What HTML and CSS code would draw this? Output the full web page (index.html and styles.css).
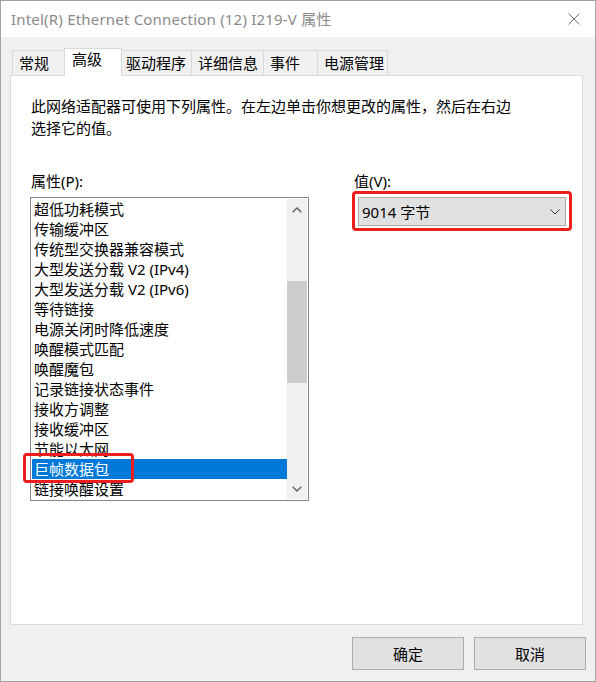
FILE: index.html
```
<!DOCTYPE html>
<html lang="zh-CN">
<head>
<meta charset="utf-8">
<title>属性</title>
<link rel="stylesheet" href="styles.css">
</head>
<body>
<div class="window">
  <div class="titlebar">
    <span class="title">Intel(R) Ethernet Connection (12) I219-V 属性</span>
    <svg class="close" width="12" height="12" viewBox="0 0 12 12"><path d="M0.5 0.5 L11.5 11.5 M11.5 0.5 L0.5 11.5" stroke="#6e6e6e" stroke-width="1" fill="none"/></svg>
  </div>
  <div class="client">
    <div class="tabs">
      <div class="tab w-general">常规</div>
      <div class="tab tab-active w-adv">高级</div>
      <div class="tab w-driver">驱动程序</div>
      <div class="tab w-detail">详细信息</div>
      <div class="tab w-event">事件</div>
      <div class="tab w-power">电源管理</div>
    </div>
    <div class="panel">
      <p class="desc">此网络适配器可使用下列属性。在左边单击你想更改的属性，然后在右边<br>选择它的值。</p>
      <div class="props">
        <div class="col-left">
          <div class="label">属性(P):</div>
          <div class="listbox">
            <ul class="items">
              <li>超低功耗模式</li>
              <li>传输缓冲区</li>
              <li>传统型交换器兼容模式</li>
              <li>大型发送分载 V2 (IPv4)</li>
              <li>大型发送分载 V2 (IPv6)</li>
              <li>等待链接</li>
              <li>电源关闭时降低速度</li>
              <li>唤醒模式匹配</li>
              <li>唤醒魔包</li>
              <li>记录链接状态事件</li>
              <li>接收方调整</li>
              <li>接收缓冲区</li>
              <li>节能以太网</li>
              <li class="selected">巨帧数据包</li>
              <li>链接唤醒设置</li>
            </ul>
            <div class="scrollbar">
              <div class="sb-btn"><svg width="10" height="6" viewBox="0 0 10 6"><path d="M0.7 5.3 L5 1 L9.3 5.3" stroke="#606060" stroke-width="1.4" fill="none"/></svg></div>
              <div class="sb-track"><div class="sb-thumb"></div></div>
              <div class="sb-btn"><svg width="10" height="6" viewBox="0 0 10 6"><path d="M0.7 0.7 L5 5 L9.3 0.7" stroke="#606060" stroke-width="1.4" fill="none"/></svg></div>
            </div>
            <div class="mark mark-item"></div>
          </div>
        </div>
        <div class="col-right">
          <div class="label">值(V):</div>
          <div class="combo-wrap">
            <div class="combo">
              <span class="combo-text">9014 字节</span>
              <svg class="combo-arrow" width="10" height="6" viewBox="0 0 10 6"><path d="M0.5 0.5 L5 5 L9.5 0.5" stroke="#3c3c3c" stroke-width="1" fill="none"/></svg>
            </div>
            <div class="mark mark-combo"></div>
          </div>
        </div>
      </div>
    </div>
    <div class="buttons">
      <button class="btn">确定</button>
      <button class="btn">取消</button>
    </div>
  </div>
</div>
</body>
</html>
```
FILE: styles.css
```
* { box-sizing: border-box; }
html, body { margin: 0; padding: 0; }
body {
  width: 596px;
  height: 682px;
  overflow: hidden;
  font-family: "Noto Sans", "Noto Sans CJK SC", sans-serif;
  font-size: 15px;
  color: #000;
  background: #f0f0f0;
}
.window {
  width: 596px;
  height: 682px;
  border: 1px solid #a3a3a3;
  background: #f0f0f0;
  display: flex;
  flex-direction: column;
}
.titlebar {
  height: 36px;
  flex: none;
  background: #fff;
  display: flex;
  align-items: center;
  padding-left: 10px;
}
.title {
  color: #8a8a8a;
  line-height: 20px;
  letter-spacing: 0.2px;
  white-space: nowrap;
}
.close { margin-left: auto; margin-right: 15px; }
.client {
  flex: 1;
  padding: 11px 9px 0 9px;
}
.tabs {
  display: flex;
  align-items: flex-end;
  height: 28px;
  margin-left: 2px;
  position: relative;
  z-index: 1;
}
.tab {
  height: 25px;
  margin-bottom: 1px;
  border: 1px solid #d9d9d9;
  border-right: none;
  border-bottom: none;
  background: #f0f0f0;
  padding: 2px 0 0 6px;
  line-height: 20px;
  white-space: nowrap;
}
.tab:last-child { border-right: 1px solid #d9d9d9; }
.tab-active {
  height: 28px;
  margin-bottom: 0;
  background: #fff;
  border-right: 1px solid #d9d9d9;
  padding: 0 0 0 7px;
}
.tab-active + .tab { border-left: none; padding-left: 4px; }
.w-general { width: 52px; }
.w-adv { width: 58px; }
.w-driver { width: 69px; }
.w-detail { width: 72px; }
.w-event { width: 54px; }
.w-power { width: 71px; }
.panel {
  margin-top: -1px;
  width: 573px;
  height: 550px;
  border: 1px solid #d9d9d9;
  background: #fff;
  padding: 19px 0 0 19px;
}
.desc {
  margin: 0;
  line-height: 22px;
  padding-left: 1px;
  white-space: nowrap;
}
.props {
  display: grid;
  grid-template-columns: 279px 230px;
  column-gap: 45px;
  margin-top: 32px;
}
.label {
  line-height: 20px;
  margin-bottom: 6px;
  white-space: nowrap;
}
.col-left .label { padding-left: 1px; }
.listbox {
  position: relative;
  width: 279px;
  height: 304px;
  border: 1px solid #828790;
  background: #fff;
  padding: 1px;
  display: flex;
}
.items {
  list-style: none;
  margin: 0;
  padding: 0;
  width: 255px;
  overflow: hidden;
  flex: none;
}
.items li {
  height: 20px;
  line-height: 20px;
  padding-left: 2px;
  white-space: nowrap;
}
.items li.selected { background: #0078d7; color: #fff; }
.scrollbar {
  width: 20px;
  flex: none;
  background: #f0f0f0;
  display: flex;
  flex-direction: column;
}
.sb-btn {
  height: 21px;
  flex: none;
  display: flex;
  align-items: center;
  justify-content: center;
}
.sb-track { flex: 1; }
.sb-thumb {
  margin-top: 61px;
  height: 102px;
  background: #cdcdcd;
}
.combo-wrap {
  position: relative;
  margin-left: 4px;
  width: 208px;
}
.combo {
  width: 208px;
  height: 29px;
  background: #e1e1e1;
  border: 1px solid #adadad;
  display: flex;
  align-items: center;
  padding-left: 3px;
}
.combo-text { line-height: 20px; white-space: nowrap; }
.combo-arrow { margin-left: auto; margin-right: 5px; }
.mark {
  position: absolute;
  border: 3px solid #ee1d1d;
  border-radius: 4px;
  pointer-events: none;
}
.mark-item { left: -8px; top: 255px; width: 111px; height: 30px; }
.mark-combo { left: -6px; top: -6px; width: 220px; height: 40px; }
.buttons {
  display: flex;
  justify-content: flex-end;
  gap: 10px;
  margin-top: 12px;
}
.btn {
  width: 112px;
  height: 33px;
  border: 1px solid #adadad;
  background: #e1e1e1;
  font: inherit;
  line-height: 20px;
  color: #000;
  padding: 0;
}
```
